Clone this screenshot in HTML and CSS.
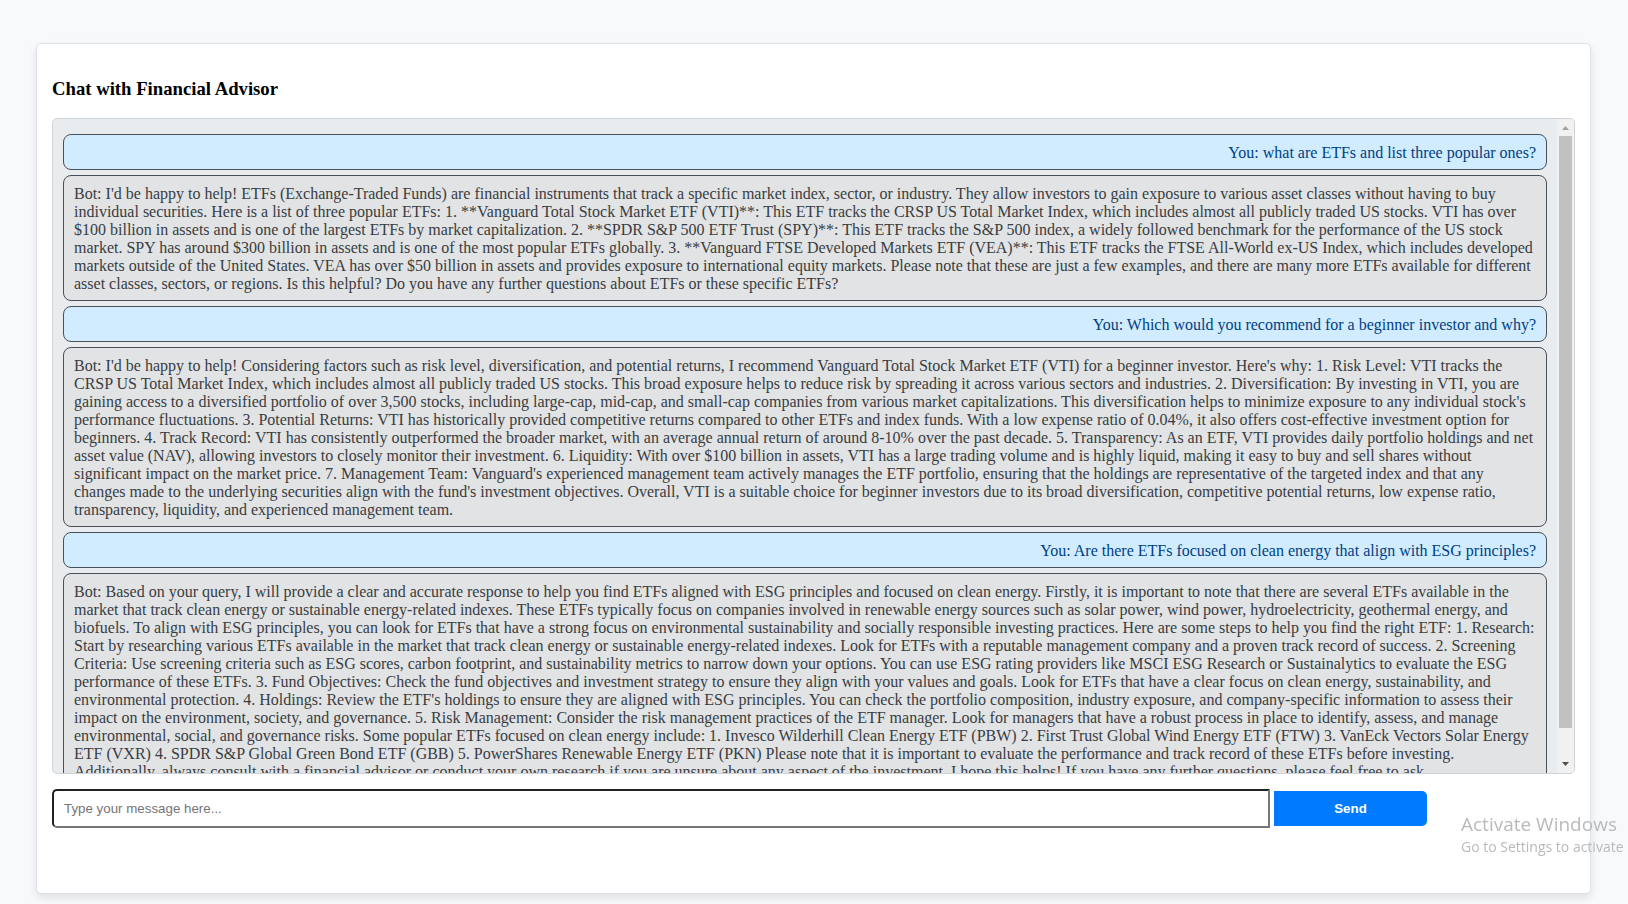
FILE: index.html
```html
<!DOCTYPE html>
<html lang="en">
<head>
<meta charset="utf-8">
<title>Chat with Financial Advisor</title>
<link rel="stylesheet" href="styles.css">
</head>
<body>
<main class="chat-container">
  <h3 class="chat-title">Chat with Financial Advisor</h3>
  <div class="chat-box">
    <div class="messages">
      <div class="message user">You: what are ETFs and list three popular ones?</div>
      <div class="message bot">Bot: I'd be happy to help! ETFs (Exchange-Traded Funds) are financial instruments that track a specific market index, sector, or industry. They allow investors to gain exposure to various asset classes without having to buy individual securities. Here is a list of three popular ETFs: 1. **Vanguard Total Stock Market ETF (VTI)**: This ETF tracks the CRSP US Total Market Index, which includes almost all publicly traded US stocks. VTI has over $100 billion in assets and is one of the largest ETFs by market capitalization. 2. **SPDR S&amp;P 500 ETF Trust (SPY)**: This ETF tracks the S&amp;P 500 index, a widely followed benchmark for the performance of the US stock market. SPY has around $300 billion in assets and is one of the most popular ETFs globally. 3. **Vanguard FTSE Developed Markets ETF (VEA)**: This ETF tracks the FTSE All-World ex-US Index, which includes developed markets outside of the United States. VEA has over $50 billion in assets and provides exposure to international equity markets. Please note that these are just a few examples, and there are many more ETFs available for different asset classes, sectors, or regions. Is this helpful? Do you have any further questions about ETFs or these specific ETFs?</div>
      <div class="message user">You: Which would you recommend for a beginner investor and why?</div>
      <div class="message bot">Bot: I'd be happy to help! Considering factors such as risk level, diversification, and potential returns, I recommend Vanguard Total Stock Market ETF (VTI) for a beginner investor. Here's why: 1. Risk Level: VTI tracks the CRSP US Total Market Index, which includes almost all publicly traded US stocks. This broad exposure helps to reduce risk by spreading it across various sectors and industries. 2. Diversification: By investing in VTI, you are gaining access to a diversified portfolio of over 3,500 stocks, including large-cap, mid-cap, and small-cap companies from various market capitalizations. This diversification helps to minimize exposure to any individual stock's performance fluctuations. 3. Potential Returns: VTI has historically provided competitive returns compared to other ETFs and index funds. With a low expense ratio of 0.04%, it also offers cost-effective investment option for beginners. 4. Track Record: VTI has consistently outperformed the broader market, with an average annual return of around 8-10% over the past decade. 5. Transparency: As an ETF, VTI provides daily portfolio holdings and net asset value (NAV), allowing investors to closely monitor their investment. 6. Liquidity: With over $100 billion in assets, VTI has a large trading volume and is highly liquid, making it easy to buy and sell shares without significant impact on the market price. 7. Management Team: Vanguard's experienced management team actively manages the ETF portfolio, ensuring that the holdings are representative of the targeted index and that any changes made to the underlying securities align with the fund's investment objectives. Overall, VTI is a suitable choice for beginner investors due to its broad diversification, competitive potential returns, low expense ratio, transparency, liquidity, and experienced management team.</div>
      <div class="message user">You: Are there ETFs focused on clean energy that align with ESG principles?</div>
      <div class="message bot">Bot: Based on your query, I will provide a clear and accurate response to help you find ETFs aligned with ESG principles and focused on clean energy. Firstly, it is important to note that there are several ETFs available in the market that track clean energy or sustainable energy-related indexes. These ETFs typically focus on companies involved in renewable energy sources such as solar power, wind power, hydroelectricity, geothermal energy, and biofuels. To align with ESG principles, you can look for ETFs that have a strong focus on environmental sustainability and socially responsible investing practices. Here are some steps to help you find the right ETF: 1. Research: Start by researching various ETFs available in the market that track clean energy or sustainable energy-related indexes. Look for ETFs with a reputable management company and a proven track record of success. 2. Screening Criteria: Use screening criteria such as ESG scores, carbon footprint, and sustainability metrics to narrow down your options. You can use ESG rating providers like MSCI ESG Research or Sustainalytics to evaluate the ESG performance of these ETFs. 3. Fund Objectives: Check the fund objectives and investment strategy to ensure they align with your values and goals. Look for ETFs that have a clear focus on clean energy, sustainability, and environmental protection. 4. Holdings: Review the ETF's holdings to ensure they are aligned with ESG principles. You can check the portfolio composition, industry exposure, and company-specific information to assess their impact on the environment, society, and governance. 5. Risk Management: Consider the risk management practices of the ETF manager. Look for managers that have a robust process in place to identify, assess, and manage environmental, social, and governance risks. Some popular ETFs focused on clean energy include: 1. Invesco Wilderhill Clean Energy ETF (PBW) 2. First Trust Global Wind Energy ETF (FTW) 3. VanEck Vectors Solar Energy ETF (VXR) 4. SPDR S&amp;P Global Green Bond ETF (GBB) 5. PowerShares Renewable Energy ETF (PKN) Please note that it is important to evaluate the performance and track record of these ETFs before investing. Additionally, always consult with a financial advisor or conduct your own research if you are unsure about any aspect of the investment. I hope this helps! If you have any further questions, please feel free to ask.</div>
    </div>
    <div class="scrollbar" aria-hidden="true">
      <svg class="arrow" viewBox="0 0 17 17"><path fill="#a3a3a3" d="M5 11h7L8.500 7z"/></svg>
      <div class="track"><div class="thumb"></div></div>
      <svg class="arrow" viewBox="0 0 17 17"><path fill="#505050" d="M5 6h7l-3.500 4z"/></svg>
    </div>
  </div>
  <form class="composer">
    <input class="composer-input" type="text" placeholder="Type your message here..." aria-label="Message">
    <button class="composer-send" type="button">Send</button>
  </form>
</main>
<aside class="watermark">
  <p class="watermark-title">Activate Windows</p>
  <p class="watermark-text">Go to Settings to activate</p>
</aside>
</body>
</html>
```

FILE: styles.css
```css
* {
  box-sizing: border-box;
}

body {
  display: flex;
  height: 100vh;
  margin: 0;
  padding: 43px 37px 10px 36px;
  overflow: hidden;
  background: #f8f9fb;
  font-family: "Liberation Serif", "Times New Roman", serif;
  font-size: 16px;
  line-height: 18px;
}

.chat-container {
  display: flex;
  flex: 1;
  flex-direction: column;
  min-width: 0;
  padding: 15px 15px 65px;
  border: 1px solid #dee2e6;
  border-radius: 5px;
  background: #fff;
  box-shadow: 0 4px 8px rgba(0, 0, 0, 0.1);
}

.chat-title {
  margin: 19px 0;
  line-height: 21px;
  color: #000;
}

.chat-box {
  display: flex;
  flex: 1;
  min-height: 0;
  overflow: hidden;
  border: 1px solid #ced4da;
  border-radius: 5px;
  background: #e9ecef;
}

.messages {
  flex: 1;
  min-width: 0;
  padding: 10px;
  overflow: hidden;
}

.message {
  margin: 5px 0;
  padding: 9px 10px 7px;
  border: 1px solid #495057;
  border-radius: 8px;
}

.user {
  background: #d1ecff;
  color: #004085;
  text-align: right;
}

.bot {
  background: #e2e3e5;
  color: #383d41;
}

.scrollbar {
  display: flex;
  flex-direction: column;
  width: 17px;
  background: #f1f1f1;
}

.arrow {
  width: 17px;
  height: 17px;
}

.track {
  flex: 1;
  padding: 0 2px;
}

.thumb {
  height: 95.5%;
  background: #c1c1c1;
}

.composer {
  display: flex;
  align-items: center;
  gap: 4px;
  margin-top: 15px;
}

.composer-input,
.composer-send {
  padding: 10px;
  font-family: "Liberation Sans", Arial, sans-serif;
  line-height: 15px;
}

.composer-input {
  width: 80%;
  border: 2px inset #767676;
  border-radius: 5px 0 0 5px;
  background: #fff;
}

.composer-input::placeholder {
  color: #757575;
}

.composer-send {
  width: 10%;
  border: 0;
  border-radius: 0 5px 5px 0;
  background: #007bff;
  color: #fff;
  font-weight: bold;
}

.watermark {
  position: fixed;
  top: 811px;
  left: 1461px;
  color: #b9babb;
  font-family: "Open Sans", "Segoe UI", sans-serif;
  white-space: nowrap;
  pointer-events: none;
}

.watermark-title {
  margin: 0;
  font-size: 19px;
  line-height: 26px;
}

.watermark-text {
  margin: 0;
  font-size: 14px;
  line-height: 20px;
}
```
